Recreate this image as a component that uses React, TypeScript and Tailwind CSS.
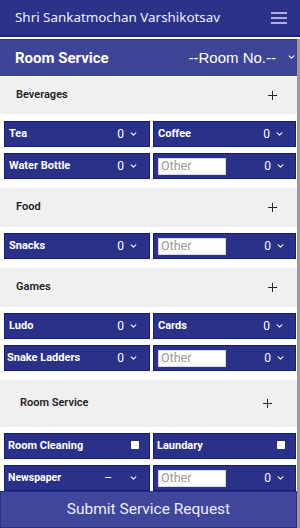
import React from "react";

type Cell =
  | { kind: "count"; label: string; pad?: string; value?: string }
  | { kind: "other" }
  | { kind: "check"; label: string };

type Section = {
  title: string;
  head: string;
  body: string;
  indent: string;
  rows: Cell[][];
};

const SECTIONS: Section[] = [
  {
    title: "Beverages",
    head: "h-[37px] mt-px",
    body: "mt-[7px]",
    indent: "pl-[16px] pr-[20px]",
    rows: [
      [
        { kind: "count", label: "Tea" },
        { kind: "count", label: "Coffee" },
      ],
      [{ kind: "count", label: "Water Bottle" }, { kind: "other" }],
    ],
  },
  {
    title: "Food",
    head: "h-[39px] mt-[9px]",
    body: "mt-[6px]",
    indent: "pl-[16px] pr-[20px]",
    rows: [[{ kind: "count", label: "Snacks" }, { kind: "other" }]],
  },
  {
    title: "Games",
    head: "h-[39px] mt-[9px]",
    body: "mt-[6px]",
    indent: "pl-[16px] pr-[20px]",
    rows: [
      [
        { kind: "count", label: "Ludo" },
        { kind: "count", label: "Cards" },
      ],
      [{ kind: "count", label: "Snake Ladders", pad: "pl-[2px]" }, { kind: "other" }],
    ],
  },
  {
    title: "Room Service",
    head: "h-[47px] mt-[9px]",
    body: "mt-[6px]",
    indent: "pl-[20px] pr-[25px]",
    rows: [
      [
        { kind: "check", label: "Room Cleaning" },
        { kind: "check", label: "Laundary" },
      ],
      [{ kind: "count", label: "Newspaper", value: "–" }, { kind: "other" }],
    ],
  },
];

function Chevron({ className = "" }: { className?: string }) {
  return (
    <svg viewBox="0 0 8 5" className={`h-[4px] w-[7px] ${className}`} fill="none" stroke="currentColor" strokeWidth="1.3" strokeLinecap="round" strokeLinejoin="round">
      <polyline points="1 1 4 4 7 1" />
    </svg>
  );
}

function ItemCell({ cell }: { cell: Cell }) {
  if (cell.kind === "other") {
    return (
      <div className="flex h-full items-center justify-between border border-[#151a7a] bg-[#2b3088] pl-[4px] pr-[11px]">
        <input
          placeholder="Other"
          className="h-[17px] w-[68px] border border-[#d8d8d8] bg-white px-[2px] text-[12.5px] text-[#444] outline-none placeholder:text-[#9a9a9a]"
        />
        <span className="flex items-center gap-[6px] text-[12px] text-white">
          0
          <Chevron />
        </span>
      </div>
    );
  }
  if (cell.kind === "check") {
    return (
      <div className="flex h-full items-center justify-between border border-[#151a7a] bg-[#2b3088] pl-[3px] pr-[10px]">
        <span className="text-[11px] font-bold text-white">{cell.label}</span>
        <span className="mb-[3px] h-[8px] w-[8px] rounded-[1px] bg-white" />
      </div>
    );
  }
  const dash = cell.value === "–";
  return (
    <div className={`flex h-full items-center justify-between border border-[#151a7a] bg-[#2b3088] pr-[12px] ${cell.pad ?? (dash ? "pl-[3px]" : "pl-[4px]")}`}>
      <span className={`font-bold text-white ${dash ? "text-[10.5px]" : "text-[11px]"}`}>{cell.label}</span>
      <span className="flex items-center text-[12px] text-white">
        <span className={dash ? "mr-[18px]" : "mr-[6px]"}>{cell.value ?? "0"}</span>
        <Chevron />
      </span>
    </div>
  );
}

function SectionBlock({ section }: { section: Section }) {
  return (
    <>
      <div className={`flex shrink-0 items-center justify-between bg-[#f0f0f0] ${section.head} ${section.indent}`}>
        <span className="text-[11px] font-semibold text-[#222]">{section.title}</span>
        <svg viewBox="0 0 10 10" className="h-[9px] w-[9px] text-[#222]" fill="none" stroke="currentColor" strokeWidth="1.1">
          <line x1="5" y1="0" x2="5" y2="10" />
          <line x1="0" y1="5" x2="10" y2="5" />
        </svg>
      </div>
      <div className={`flex shrink-0 flex-col gap-[6px] pl-[4px] pr-px ${section.body}`}>
        {section.rows.map((row, i) => (
          <div key={i} className="grid h-[26px] grid-cols-[146px_1fr] gap-[3px]">
            {row.map((cell, j) => (
              <ItemCell key={j} cell={cell} />
            ))}
          </div>
        ))}
      </div>
    </>
  );
}

export default function App() {
  return (
    <div className="flex h-[528px] w-[300px] flex-col overflow-hidden bg-white font-['Roboto',sans-serif]">
      <header className="flex h-[37px] shrink-0 items-center justify-between border-b-2 border-[#1f2378] bg-[#2c3189] pl-[15px] pr-[13px]">
        <span className="font-['Noto_Sans',sans-serif] text-[13.4px] text-[#eef0ff]">Shri Sankatmochan Varshikotsav</span>
        <svg viewBox="0 0 16 12" className="h-[12px] w-[16px] text-[#e8eaff]" fill="none" stroke="currentColor" strokeWidth="1.4">
          <line x1="0" y1="1" x2="16" y2="1" />
          <line x1="0" y1="6" x2="16" y2="6" />
          <line x1="0" y1="11" x2="16" y2="11" />
        </svg>
      </header>

      <div className="mt-[2px] flex flex-1 flex-col border-r-[3px] border-[#9a9a9a]">
        <div className="flex h-[37px] shrink-0 items-center justify-between border-t border-[#2c3189] bg-[#3f4596] pl-[15px] pr-[2px]">
          <span className="text-[15px] font-bold text-white">Room Service</span>
          <span className="flex items-center gap-[12px] font-['Liberation_Sans',sans-serif] text-[15px] text-white">
            --Room No.--
            <Chevron className="mb-[2px]" />
          </span>
        </div>

        {SECTIONS.map((s) => (
          <SectionBlock key={s.title} section={s} />
        ))}

        <button className="h-[37px] shrink-0 border border-[#2a2f86] bg-[#40469a] text-[15.5px] text-[#ecedfa]">
          Submit Service Request
        </button>
      </div>
    </div>
  );
}
